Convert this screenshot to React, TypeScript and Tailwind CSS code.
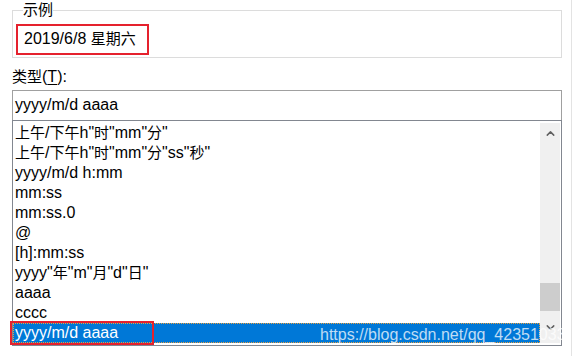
import { ChevronUp, ChevronDown } from "lucide-react";

const formats = [
  '上午/下午h"时"mm"分"',
  '上午/下午h"时"mm"分"ss"秒"',
  "yyyy/m/d h:mm",
  "mm:ss",
  "mm:ss.0",
  "@",
  "[h]:mm:ss",
  'yyyy"年"m"月"d"日"',
  "aaaa",
  "cccc",
];

const font = { fontFamily: '"Liberation Sans", "Noto Sans CJK SC", sans-serif' };

// CJK glyphs in the screenshot are a touch smaller than the latin text
function Txt({ s }: { s: string }) {
  return (
    <>
      {s.split(/([\u4e00-\u9fff]+)/).map((part, i) =>
        /[\u4e00-\u9fff]/.test(part) ? (
          <span key={i} className="text-[15px]">
            {part}
          </span>
        ) : (
          part
        )
      )}
    </>
  );
}

export default function App() {
  return (
    <div className="w-[574px] h-[356px] bg-white flex overflow-hidden text-[16px] text-black" style={font}>
      <div className="relative w-[572px] border-r border-[#e3e3e3] pl-[12px] pr-[9px]">
        {/* 示例 group box */}
        <fieldset className="border border-[#dcdcdc] h-[58px] px-[3px]">
          <legend className="ml-[7px] leading-[20px] text-[15px]">示例</legend>
          <div className="mt-[4px] w-[133px] h-[31px] border-2 border-[#e5212d] pl-[6px] leading-[26px]">
            <Txt s="2019/6/8 星期六" />
          </div>
        </fieldset>

        <div className="mt-[9px] leading-[20px]">
          <Txt s="类型" />(<span className="underline underline-offset-2">T</span>):
        </div>

        {/* type input */}
        <div className="mt-[3px] h-[30px] border border-b-0 border-[#a0a0a0] pl-[2px] leading-[28px]">
          yyyy/m/d aaaa
        </div>

        {/* format list */}
        <div className="h-[226px] border border-[#828790] flex">
          <div className="flex-1 pt-[2px]">
            {formats.map((f) => (
              <div key={f} className="h-[20px] leading-[20px] pl-[2px]">
                <Txt s={f} />
              </div>
            ))}
            <div className="h-[20px] leading-[18px] pl-[1px] bg-[#0078d7] text-white border border-dotted border-[#e8a040]">
              yyyy/m/d aaaa
            </div>
          </div>
          <div className="w-[20px] my-[2px] mr-[1px] bg-[#f0f0f0] flex flex-col">
            <div className="h-[20px] flex items-center justify-center text-[#606060]">
              <ChevronUp size={13} strokeWidth={2.75} />
            </div>
            <div className="h-[140px]" />
            <div className="h-[28px] bg-[#cdcdcd]" />
            <div className="flex-1 flex items-center justify-center text-[#606060]">
              <ChevronDown size={13} strokeWidth={2.75} />
            </div>
          </div>
        </div>

        {/* annotation over selected row */}
        <div className="absolute left-[10px] top-[321px] w-[144px] h-[24px] border-2 border-[#e5212d]" />

        {/* watermark */}
        <div className="absolute left-[320px] top-[325px] text-[16px] leading-[20px] text-white/75 whitespace-nowrap">
          https://blog.csdn.net/qq_42351033
        </div>
      </div>
    </div>
  );
}
